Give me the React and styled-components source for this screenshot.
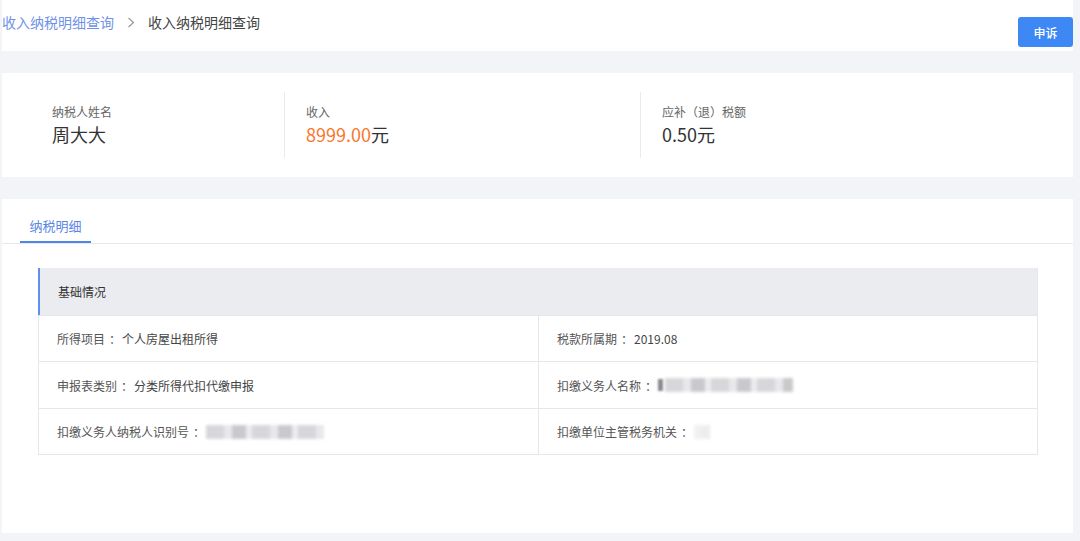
import React from "react";
import styled, { createGlobalStyle } from "styled-components";

const Global = createGlobalStyle`
  html, body { margin: 0; padding: 0; background: #f3f4f8; }
  body { font-family: "Noto Sans CJK SC", "Noto Sans", sans-serif; color: #333; }
  * { box-sizing: border-box; }
`;

const Page = styled.div`
  padding: 0 7px 8px 2px;
  display: flex;
  flex-direction: column;
  gap: 22px;
`;

const Header = styled.header`
  height: 51px;
  background: #fff;
  display: flex;
  justify-content: space-between;
  align-items: flex-start;
`;

const Crumbs = styled.nav`
  display: flex;
  align-items: center;
  padding-top: 13px;
  font-size: 14px;
  line-height: 18px;
`;

const CrumbLink = styled.a`
  color: #6f92e8;
  text-decoration: none;
`;

const CrumbSep = styled.span`
  display: inline-flex;
  margin: 0 13px 0 13px;
  color: #999;
`;

const CrumbCurrent = styled.span`
  color: #444;
`;

const AppealButton = styled.button`
  margin-top: 17px;
  width: 55px;
  height: 30px;
  border: none;
  border-radius: 3px;
  background: #3e88f6;
  color: #fff;
  font-family: inherit;
  font-size: 12px;
  font-weight: 500;
  cursor: pointer;
`;

const Summary = styled.section`
  height: 104px;
  background: #fff;
  display: grid;
  grid-template-columns: 282px 356px 1fr;
`;

const SummaryItem = styled.div`
  margin: 19px 0;
  padding: 11px 0 0 ${(p) => (p.$first ? "50px" : "21px")};
  border-left: ${(p) => (p.$first ? "none" : "1px solid #e9eaee")};
  display: flex;
  flex-direction: column;
  gap: 1px;
`;

const SummaryLabel = styled.div`
  font-size: 12px;
  line-height: 18px;
  color: #666;
`;

const SummaryValue = styled.div`
  font-size: 18px;
  line-height: 24px;
  color: ${(p) => (p.$accent ? "#f7782f" : "#333")};
`;

const Unit = styled.span`
  color: #333;
`;

const DetailCard = styled.section`
  height: 334px;
  background: #fff;
`;

const TabBar = styled.div`
  height: 45px;
  border-bottom: 1px solid #e8e8ec;
  padding-left: 18px;
  display: flex;
`;

const Tab = styled.div`
  width: 71px;
  height: 44px;
  padding-top: 18px;
  text-align: center;
  font-size: 13px;
  line-height: 18px;
  color: ${(p) => (p.$active ? "#5b86e5" : "#666")};
  border-bottom: 2px solid ${(p) => (p.$active ? "#4f86ec" : "transparent")};
`;

const Table = styled.div`
  margin: 24px 35px 0 36px;
  border: 1px solid #e6e7eb;
  border-top: none;
`;

const TableHead = styled.div`
  height: 47px;
  background: #ebecf0;
  border-left: 2px solid #5b8ff0;
  margin-left: -1px;
  padding-left: 18px;
  display: flex;
  align-items: center;
  font-size: 12px;
  color: #333;
`;

const Row = styled.div`
  display: grid;
  grid-template-columns: 499px 1fr;
  border-top: 1px solid #e6e7eb;
  height: ${(p) => p.$h || 46}px;
`;

const Cell = styled.div`
  display: flex;
  align-items: center;
  padding-left: 18px;
  font-size: 12px;
  color: #555;
  border-left: ${(p) => (p.$second ? "1px solid #e6e7eb" : "none")};
`;

const Colon = styled.span`
  padding-left: 4px;
  padding-right: 1px;
`;

const Value = styled.span`
  color: #444;
`;

const Redacted = styled.span`
  display: inline-block;
  width: ${(p) => p.$w}px;
  height: 14px;
  margin-left: ${(p) => p.$ml || 0}px;
  background: ${(p) =>
    p.$light
      ? "linear-gradient(90deg, #f1f1f3, #e9e9ec)"
      : "repeating-linear-gradient(90deg, #d3d3d7 0 18px, #e6e6e9 18px 26px, #c4c4c8 26px 40px, #eaeaed 40px 46px)"};
  filter: blur(1.5px);
  opacity: 0.9;
`;

const Dot = styled.span`
  display: inline-block;
  width: 5px;
  height: 12px;
  background: #8a8a8e;
  filter: blur(0.8px);
`;

function Chevron() {
  return (
    <svg width="8" height="11" viewBox="0 0 8 11" fill="none">
      <path d="M1.5 1l5 4.5-5 4.5" stroke="#999" strokeWidth="1.2" />
    </svg>
  );
}

function Label({ children }) {
  return (
    <>
      {children}
      <Colon>：</Colon>
    </>
  );
}

export default function App() {
  return (
    <>
      <Global />
      <Page>
        <Header>
          <Crumbs>
            <CrumbLink href="#">收入纳税明细查询</CrumbLink>
            <CrumbSep>
              <Chevron />
            </CrumbSep>
            <CrumbCurrent>收入纳税明细查询</CrumbCurrent>
          </Crumbs>
          <AppealButton>申诉</AppealButton>
        </Header>

        <Summary>
          <SummaryItem $first>
            <SummaryLabel>纳税人姓名</SummaryLabel>
            <SummaryValue>周大大</SummaryValue>
          </SummaryItem>
          <SummaryItem>
            <SummaryLabel>收入</SummaryLabel>
            <SummaryValue $accent>
              8999.00<Unit>元</Unit>
            </SummaryValue>
          </SummaryItem>
          <SummaryItem>
            <SummaryLabel>应补（退）税额</SummaryLabel>
            <SummaryValue>0.50元</SummaryValue>
          </SummaryItem>
        </Summary>

        <DetailCard>
          <TabBar>
            <Tab $active>纳税明细</Tab>
          </TabBar>
          <Table>
            <TableHead>基础情况</TableHead>
            <Row>
              <Cell>
                <Label>所得项目</Label>
                <Value>个人房屋出租所得</Value>
              </Cell>
              <Cell $second>
                <Label>税款所属期</Label>
                <Value>2019.08</Value>
              </Cell>
            </Row>
            <Row $h={47}>
              <Cell>
                <Label>申报表类别</Label>
                <Value>分类所得代扣代缴申报</Value>
              </Cell>
              <Cell $second>
                <Label>扣缴义务人名称</Label>
                <Dot />
                <Redacted $w={128} $ml={2} />
              </Cell>
            </Row>
            <Row>
              <Cell>
                <Label>扣缴义务人纳税人识别号</Label>
                <Redacted $w={118} />
              </Cell>
              <Cell $second>
                <Label>扣缴单位主管税务机关</Label>
                <Redacted $w={16} $light />
              </Cell>
            </Row>
          </Table>
        </DetailCard>
      </Page>
    </>
  );
}
